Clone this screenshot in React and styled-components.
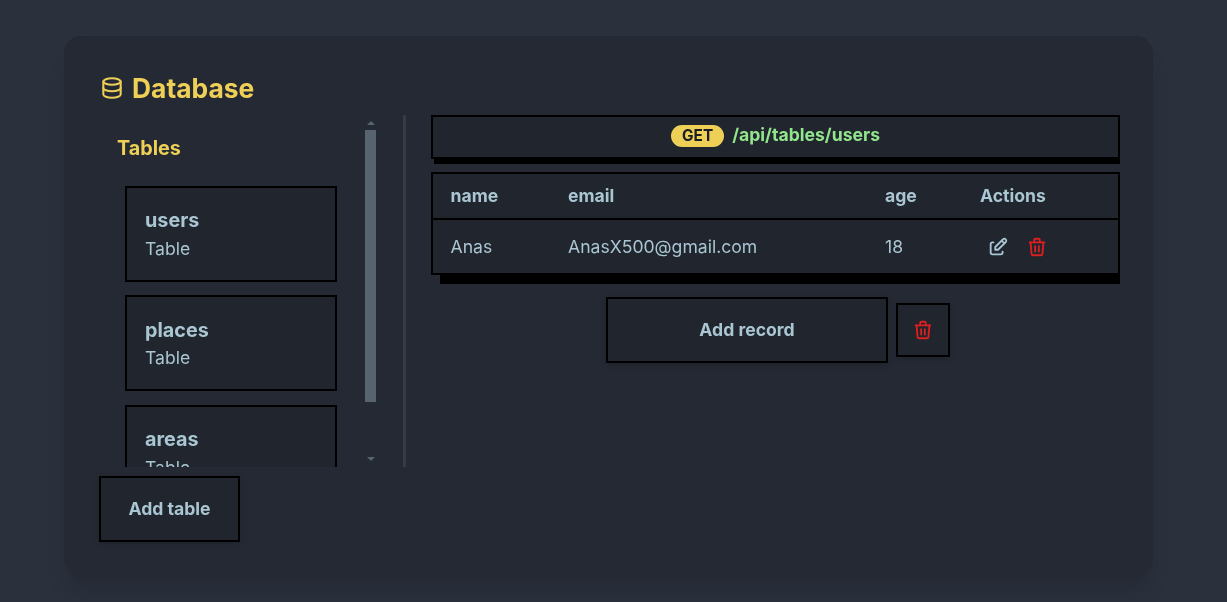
import styled, { createGlobalStyle } from "styled-components";
import { TbDatabase, TbEdit, TbTrash } from "react-icons/tb";

const GlobalStyle = createGlobalStyle`
  html, body {
    margin: 0;
    background: #2a303c;
  }
  body {
    font-family: Inter, "Liberation Sans", sans-serif;
    color: #a9c6d2;
  }
`;

const Page = styled.div`
  height: 602px;
  box-sizing: border-box;
  padding: 36px 74px 26px 64px;
  overflow: hidden;
`;

const Card = styled.div`
  height: 540px;
  box-sizing: border-box;
  padding: 34px 33px 34px 35px;
  background: #242933;
  border-radius: 17.6px;
  box-shadow: 0 20px 25px -5px rgba(0, 0, 0, 0.1), 0 8px 10px -6px rgba(0, 0, 0, 0.1);
  display: flex;
  flex-direction: column;
  will-change: transform;
`;

const Title = styled.h1`
  margin: 0 0 9px;
  height: 36px;
  display: flex;
  align-items: center;
  gap: 7px;
  color: #efd057;
  font-size: 26.4px;
  font-weight: 700;
  line-height: 36px;
  svg {
    width: 26px;
    height: 26px;
    stroke-width: 1.9;
  }
`;

const Body = styled.div`
  height: 352px;
  display: flex;
`;

const Sidebar = styled.div`
  width: 277px;
  display: flex;
`;

const TableList = styled.div`
  width: 266px;
  overflow: hidden;
  box-sizing: border-box;
  padding: 21px 0 0 18px;
`;

const ListTitle = styled.div`
  color: #efd057;
  font-size: 19.8px;
  font-weight: 700;
  line-height: 24px;
  margin-bottom: 26px;
`;

const TableItem = styled.div`
  width: 212px;
  height: 96px;
  margin: 0 0 13.4px 8px;
  box-sizing: border-box;
  border: 2px solid #000;
  background: #20252e;
  padding: 18.2px 18px;
`;

const ItemName = styled.div`
  font-size: 19.8px;
  font-weight: 700;
  line-height: 29.7px;
`;

const ItemKind = styled.div`
  font-size: 17.6px;
  line-height: 26px;
`;

const Scrollbar = styled.div`
  width: 11px;
  display: flex;
  flex-direction: column;
  align-items: center;
  padding: 6px 0;
  box-sizing: border-box;
`;

const ScrollArrow = styled.div`
  width: 0;
  height: 0;
  border-left: 4px solid transparent;
  border-right: 4px solid transparent;
  ${(props) =>
    props.$down
      ? "border-top: 4px solid #566370; margin-top: auto;"
      : "border-bottom: 4px solid #566370;"}
`;

const ScrollThumb = styled.div`
  width: 11px;
  height: 272px;
  margin-top: 5px;
  background: #57636f;
`;

const Divider = styled.div`
  width: 3px;
  margin-left: 27px;
  margin-right: 25px;
  background: #343b47;
`;

const Main = styled.div`
  flex: 1;
  display: flex;
  flex-direction: column;
`;

const Endpoint = styled.div`
  height: 44px;
  box-sizing: border-box;
  border: 2px solid #000;
  background: #20252e;
  display: flex;
  align-items: flex-start;
  justify-content: center;
  gap: 8px;
  padding-top: 8px;
  box-shadow: 1.5px 6.5px 0 -1.5px #000;
`;

const Method = styled.span`
  background: #efd057;
  color: #1a1d24;
  border-radius: 11px;
  height: 22px;
  padding: 0 11px;
  font-size: 15.4px;
  font-weight: 700;
  line-height: 21px;
`;

const Path = styled.span`
  color: #93e58d;
  font-size: 17.6px;
  font-weight: 700;
  line-height: 20px;
`;

const DataTable = styled.table`
  margin-top: 13px;
  width: 100%;
  table-layout: fixed;
  border-collapse: collapse;
  background: #20252e;
  border: 2px solid #000;
  box-shadow: 4.5px 13.5px 0 -4.5px #000;
  font-size: 17.6px;
`;

const HeadCell = styled.th`
  height: 42px;
  padding: 0 0 2px ${(props) => props.$inset || "18px"};
  text-align: left;
  font-weight: 700;
  border-bottom: 2px solid #000;
`;

const Cell = styled.td`
  height: 53px;
  padding: 0 0 0 ${(props) => props.$inset || "18px"};
`;

const IconRow = styled.div`
  display: flex;
  gap: 17.5px;
  padding-left: 6.5px;
`;

const IconButton = styled.span`
  display: flex;
  color: ${(props) => (props.$danger ? "#dc1f1f" : "#a9c6d2")};
  svg {
    width: 22px;
    height: 22px;
  }
`;

const Controls = styled.div`
  margin-top: 22px;
  padding-left: 5px;
  display: flex;
  align-items: center;
  justify-content: center;
  gap: 8px;
`;

const Button = styled.button`
  box-sizing: border-box;
  width: ${(props) => props.$width};
  height: ${(props) => props.$height};
  border: 2px solid #000;
  background: #20252e;
  color: #a9c6d2;
  font-family: inherit;
  font-size: 17.6px;
  font-weight: 700;
  padding: 0;
  display: flex;
  align-items: center;
  justify-content: center;
  flex-shrink: 0;
  box-shadow: 0 2px 6px rgba(0, 0, 0, 0.15);
`;

const TextButton = styled(Button)`
  padding-bottom: 2px;
`;

const Footer = styled.div`
  margin-top: 9px;
`;

const tables = ["users", "places", "areas"];

export default function App() {
  return (
    <>
      <GlobalStyle />
      <Page>
        <Card>
          <Title>
            <TbDatabase />
            Database
          </Title>
          <Body>
            <Sidebar>
              <TableList>
                <ListTitle>Tables</ListTitle>
                {tables.map((name) => (
                  <TableItem key={name}>
                    <ItemName>{name}</ItemName>
                    <ItemKind>Table</ItemKind>
                  </TableItem>
                ))}
              </TableList>
              <Scrollbar>
                <ScrollArrow />
                <ScrollThumb />
                <ScrollArrow $down />
              </Scrollbar>
            </Sidebar>
            <Divider />
            <Main>
              <Endpoint>
                <Method>GET</Method>
                <Path>/api/tables/users</Path>
              </Endpoint>
              <DataTable>
                <colgroup>
                  <col style={{ width: 118 }} />
                  <col style={{ width: 317 }} />
                  <col style={{ width: 95 }} />
                  <col />
                </colgroup>
                <thead>
                  <tr>
                    <HeadCell $inset="17.5px">name</HeadCell>
                    <HeadCell>email</HeadCell>
                    <HeadCell>age</HeadCell>
                    <HeadCell>Actions</HeadCell>
                  </tr>
                </thead>
                <tbody>
                  <tr>
                    <Cell $inset="17.5px">Anas</Cell>
                    <Cell>AnasX500@gmail.com</Cell>
                    <Cell>18</Cell>
                    <Cell>
                      <IconRow>
                        <IconButton><TbEdit /></IconButton>
                        <IconButton $danger><TbTrash /></IconButton>
                      </IconRow>
                    </Cell>
                  </tr>
                </tbody>
              </DataTable>
              <Controls>
                <TextButton $width="282px" $height="66px">Add record</TextButton>
                <Button $width="54px" $height="54px">
                  <IconButton $danger><TbTrash /></IconButton>
                </Button>
              </Controls>
            </Main>
          </Body>
          <Footer>
            <TextButton $width="141px" $height="66px">Add table</TextButton>
          </Footer>
        </Card>
      </Page>
    </>
  );
}
